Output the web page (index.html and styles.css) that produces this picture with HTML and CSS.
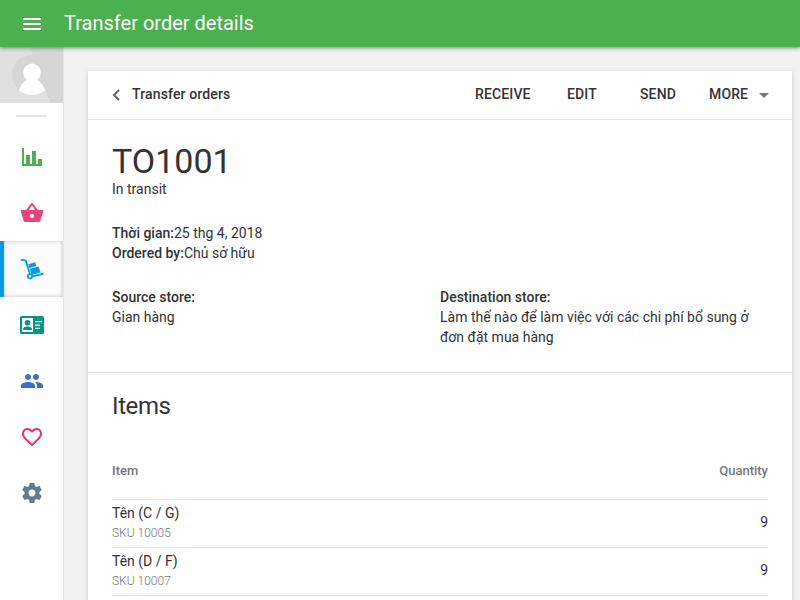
FILE: index.html
```html
<!DOCTYPE html>
<html lang="vi">
<head>
  <meta charset="utf-8">
  <meta name="viewport" content="width=device-width, initial-scale=1.0">
  <title>Transfer order details</title>
  <link rel="stylesheet" href="styles.css">
</head>
<body>

  <header class="topbar">
    <svg class="menu-icon" width="18" height="12" viewBox="0 0 18 12"><path d="M0 0h18v2H0zM0 5h18v2H0zM0 10h18v2H0z"/></svg>
    <h1>Transfer order details</h1>
  </header>

  <div class="layout">
    <nav class="sidebar">
      <div class="avatar">
        <svg width="63" height="56" viewBox="0 0 63 56">
          <path fill="#e0e0e0" d="M0 0h63v56H0z"/>
          <circle cx="32" cy="28" r="20" fill="#d6d6d6"/>
          <path fill="#d6d6d6" d="M30 0h33v56H50z"/>
          <circle cx="32" cy="25.5" r="9" fill="#fff"/>
          <path fill="#fff" d="M18.800 43C21.300 36.500 25 33.500 28 32.500H36C39 33.500 42.700 36.500 45.200 43C41.800 46.200 37.300 48 32 48S22.200 46.200 18.800 43z"/>
        </svg>
      </div>
      <div class="divider"></div>

      <a class="nav-item reports">
        <svg width="24" height="24" viewBox="0 0 24 24"><path d="M2 3h2v16h18v2H2zM6 10h4v9H6zM12 6h4v13h-4zM18 14h4v5h-4z"/></svg>
      </a>
      <a class="nav-item goods">
        <svg width="24" height="24" viewBox="0 0 24 24"><path fill-rule="evenodd" d="M1 9h5.300L11 2.600Q12 1.400 13 2.600L17.700 9H23v2.300L20.200 20Q19.900 21 19 21H5Q4.100 21 3.800 20L1 11.300zM8.800 9h6.400L12 4.500zM12 13a2 2 0 1 0 0 4a2 2 0 1 0 0-4z"/></svg>
      </a>
      <a class="nav-item inventory active">
        <svg width="24" height="24" viewBox="0 0 24 24">
          <path class="stroke" d="M.8 2.700l4.900.9L10 17M12.800 19.300L23.500 16.600"/>
          <circle class="stroke" cx="10" cy="19.300" r="2.100"/>
          <path d="M8.300 7.200l6.900-2 1.100 3.700-6.800 2zM9.900 11.800l8.500-2.400 2.200 6.200-8.900 2.200z"/>
        </svg>
      </a>
      <a class="nav-item employees">
        <svg width="24" height="24" viewBox="0 0 24 24">
          <rect x="0" y="3" width="24" height="18" rx="1.500"/>
          <path class="light" d="M2 5h11v14H2zM15 8h7v1.300h-7zM15 11.500h5v1.200h-5zM15 14.700h5v1.200h-5z"/>
          <circle cx="7.500" cy="9.700" r="2.800"/>
          <path d="M2.800 17c0-2.700 2.300-3.600 4.700-3.600s4.700.9 4.700 3.600z"/>
        </svg>
      </a>
      <a class="nav-item customers">
        <svg width="24" height="24" viewBox="0 0 24 24"><path d="M16 11c1.660 0 2.990-1.340 2.990-3S17.660 5 16 5c-1.660 0-3 1.340-3 3s1.340 3 3 3zm-8 0c1.660 0 2.990-1.340 2.990-3S9.660 5 8 5C6.340 5 5 6.340 5 8s1.340 3 3 3zm0 2c-2.330 0-7 1.170-7 3.500V19h14v-2.500c0-2.330-4.670-3.500-7-3.500zm8 0c-.29 0-.62.020-.97.050 1.160.84 1.970 1.970 1.970 3.450V19h6v-2.500c0-2.330-4.670-3.500-7-3.500z"/></svg>
      </a>
      <a class="nav-item loyalty">
        <svg width="24" height="24" viewBox="0 0 24 24"><path d="M16.500 3c-1.740 0-3.410.81-4.500 2.090C10.910 3.810 9.240 3 7.500 3 4.420 3 2 5.420 2 8.500c0 3.780 3.400 6.860 8.550 11.540L12 21.350l1.450-1.320C18.600 15.360 22 12.280 22 8.500 22 5.420 19.580 3 16.500 3zm-4.400 15.550l-.1.100-.1-.1C7.140 14.240 4 11.390 4 8.500 4 6.500 5.500 5 7.500 5c1.540 0 3.040.99 3.570 2.360h1.870C13.460 5.990 14.960 5 16.500 5c2 0 3.500 1.500 3.500 3.500 0 2.890-3.140 5.740-7.900 10.050z"/></svg>
      </a>
      <a class="nav-item settings">
        <svg width="24" height="24" viewBox="0 0 24 24"><path d="M19.430 12.980c.04-.32.070-.64.070-.98s-.03-.66-.07-.98l2.110-1.650c.19-.15.240-.42.120-.64l-2-3.460c-.12-.22-.39-.3-.61-.22l-2.490 1c-.52-.4-1.080-.73-1.690-.98l-.38-2.650C14.460 2.180 14.250 2 14 2h-4c-.25 0-.46.180-.49.420l-.38 2.650c-.61.250-1.170.59-1.690.98l-2.490-1c-.23-.09-.49 0-.61.220l-2 3.460c-.13.220-.07.490.12.640l2.110 1.650c-.04.32-.07.650-.07.980s.03.660.07.980l-2.110 1.650c-.19.150-.24.420-.12.640l2 3.460c.12.220.39.300.61.220l2.490-1c.52.400 1.080.73 1.690.98l.38 2.650c.03.240.24.420.49.420h4c.25 0 .46-.18.490-.42l.38-2.650c.61-.25 1.170-.59 1.690-.98l2.490 1c.23.090.49 0 .61-.22l2-3.460c.12-.22.070-.49-.12-.64l-2.110-1.650zM12 15.500c-1.930 0-3.500-1.570-3.500-3.500s1.570-3.500 3.500-3.500 3.500 1.570 3.500 3.500-1.570 3.500-3.500 3.500z"/></svg>
      </a>
    </nav>

    <main class="content">
      <div class="card">
        <div class="card-toolbar">
          <a class="back">
            <svg width="8" height="12" viewBox="0 0 8 12"><path d="M7 1L2 6l5 5"/></svg>
            <span>Transfer orders</span>
          </a>
          <div class="actions">
            <a class="action receive">Receive</a>
            <a class="action edit">Edit</a>
            <a class="action send">Send</a>
            <a class="action more">More
              <svg width="10" height="5" viewBox="0 0 10 5"><path d="M0 0h10L5 5z"/></svg>
            </a>
          </div>
        </div>

        <section class="details">
          <h2>TO1001</h2>
          <p>In transit</p>
          <div class="meta">
            <p><strong>Thời gian:</strong>25 thg 4, 2018</p>
            <p><strong>Ordered by:</strong>Chủ sở hữu</p>
          </div>
          <div class="stores">
            <div>
              <strong>Source store:</strong>
              <p>Gian hàng</p>
            </div>
            <div>
              <strong>Destination store:</strong>
              <p>Làm thế nào để làm việc với các chi phí bổ sung ở đơn đặt mua hàng</p>
            </div>
          </div>
        </section>

        <section class="items">
          <h3>Items</h3>
          <div class="row row-head">
            <span>Item</span>
            <span>Quantity</span>
          </div>
          <div class="row">
            <div class="product">
              <div class="name">Tên (C / G)</div>
              <div class="sku">SKU 10005</div>
            </div>
            <span>9</span>
          </div>
          <div class="row">
            <div class="product">
              <div class="name">Tên (D / F)</div>
              <div class="sku">SKU 10007</div>
            </div>
            <span>9</span>
          </div>
        </section>
      </div>
    </main>
  </div>

</body>
</html>
```
FILE: styles.css
```css
* {
  box-sizing: border-box;
}

body {
  margin: 0;
  height: 100vh;
  display: flex;
  flex-direction: column;
  background: #f1f1f1;
  color: #333;
  font-family: Roboto, "Noto Sans", sans-serif;
  font-size: 14px;
  line-height: 20px;
}

h1, h2, h3, p {
  margin: 0;
  font-weight: 400;
}

strong {
  font-weight: 500;
}

svg {
  display: block;
  flex-shrink: 0;
}

/* Green bar on top */
.topbar {
  position: relative; /* keeps the shadow above the page */
  z-index: 1;
  display: flex;
  align-items: center;
  flex-shrink: 0;
  height: 47px;
  padding-left: 23px;
  background: #4caf50;
  color: #fff;
  box-shadow: 0 1px 4px rgba(0, 0, 0, 0.45);
}

.topbar h1 {
  margin-left: 23px;
  padding-bottom: 2px;
  font-size: 20px;
}

.menu-icon {
  margin-top: 1px;
  fill: #fff;
}

.layout {
  display: flex;
  flex: 1;
  min-height: 0;
}

/* Side navigation */
.sidebar {
  width: 64px;
  background: #fff;
  border-right: 1px solid #e6e6e6;
}

.avatar {
  height: 56px;
}

.divider {
  width: 31px;
  height: 2px;
  margin: 12px 16px;
  background: #e6e6e6;
}

.nav-item {
  display: flex;
  align-items: center;
  justify-content: center;
  height: 56px;
  padding-left: 1px;
  fill: currentColor;
}

.nav-item.active {
  padding-left: 0;
  padding-right: 3px;
  border-left: 4px solid #039be5;
  background: #fcfcfc;
  box-shadow: inset 0 0 4px rgba(0, 0, 0, 0.24);
}

.nav-item .stroke {
  fill: none;
  stroke: currentColor;
  stroke-width: 1.8;
}

.nav-item .light {
  fill: #fff;
}

.reports { color: #4caf50; }
.goods { color: #e2467a; }
.inventory { color: #039be5; }
.employees { color: #009688; }
.customers { color: #3a6fc4; }
.loyalty { color: #e0356f; }
.settings { color: #607d8b; }

/* Main card */
.content {
  flex: 1;
  padding: 24px 8px 0 24px;
}

.card {
  height: 100%;
  background: #fff;
  box-shadow: 0 1px 4px rgba(0, 0, 0, 0.16);
}

.card-toolbar {
  display: flex;
  justify-content: space-between;
  align-items: center;
  height: 49px;
  padding: 0 23px 2px 24px;
  border-bottom: 1px solid #e6e6e6;
  font-weight: 500;
  letter-spacing: 0.14px;
}

.back {
  display: flex;
  align-items: center;
  gap: 12px;
}

.back svg {
  margin-top: 2px;
  fill: none;
  stroke: #666;
  stroke-width: 2;
}

.actions {
  display: flex;
  text-transform: uppercase;
}

.receive { width: 92px; }
.edit { width: 73px; }
.send { width: 69px; }

.more {
  display: flex;
  align-items: center;
  justify-content: space-between;
  width: 60px;
}

.more svg {
  margin-top: 2px;
  fill: #757575;
}

.details {
  padding: 21px 24px 25px;
  border-bottom: 1px solid #e6e6e6;
}

.details h2 {
  padding-top: 2px;
  font-size: 34px;
  line-height: 36px;
}

.meta {
  margin: 24px 0;
}

.stores {
  display: grid;
  grid-template-columns: 1fr 1fr;
}

.items {
  padding: 17px 24px 0;
}

.items h3 {
  margin-bottom: 20px;
  font-size: 24px;
  letter-spacing: -0.4px;
  line-height: 32px;
}

.row {
  display: flex;
  justify-content: space-between;
  align-items: center;
  height: 48px;
  padding-bottom: 3px;
  border-bottom: 1px solid #e6e6e6;
}

.row-head {
  height: 58px;
  padding: 0;
  color: #777;
  font-size: 13px;
  font-weight: 500;
}

.product {
  padding-top: 2px;
}

.sku {
  padding-top: 1px;
  color: #777;
  font-size: 12px;
  font-weight: 300;
  line-height: 19px;
}
```
